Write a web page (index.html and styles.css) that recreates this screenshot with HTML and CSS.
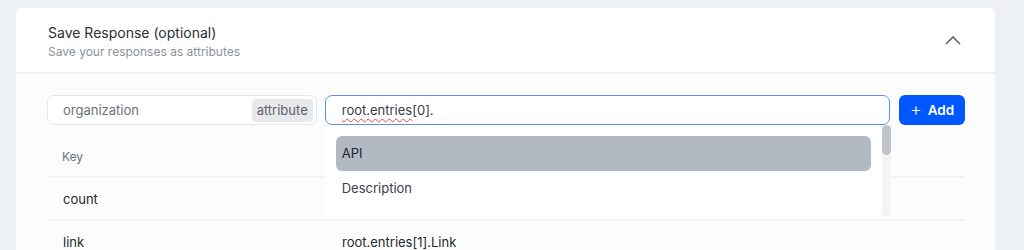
FILE: index.html
```html
<!DOCTYPE html>
<html>
<head>
	<title>Save Response</title>
	<link rel="stylesheet" href="styles.css">
</head>
<body>
	<div class="card">
		<div class="card-header">
			<div class="heading">
				<div class="title">Save Response (optional)</div>
				<div class="subtitle">Save your responses as attributes</div>
			</div>
			<svg class="chevron" width="16" height="10" viewBox="0 0 16 10">
				<path d="M1 9 L8 2 L15 9" fill="none" stroke="#5f6670" stroke-width="1.6"/>
			</svg>
		</div>
		<div class="card-body">
			<div class="form-row">
				<div class="field key-field">
					<span class="field-text">organization</span>
					<span class="badge">attribute</span>
				</div>
				<div class="path-wrap">
					<div class="field path-field">
						<span class="field-value"><span class="misspelt">root.entries</span>[0].</span>
					</div>
					<div class="dropdown">
						<div class="options">
							<div class="option active">API</div>
							<div class="option">Description</div>
						</div>
						<div class="scroll-track"><div class="scroll-thumb"></div></div>
					</div>
				</div>
				<button class="add-btn"><span class="plus">+</span> Add</button>
			</div>
			<div class="attr-table">
				<div class="attr-row head">
					<div class="cell key">Key</div>
					<div class="cell value"></div>
				</div>
				<div class="attr-row">
					<div class="cell key">count</div>
					<div class="cell value"></div>
				</div>
				<div class="attr-row">
					<div class="cell key">link</div>
					<div class="cell value">root.entries[1].Link</div>
				</div>
			</div>
		</div>
	</div>
</body>
</html>
```

FILE: styles.css
```css
body {
	margin: 0;
	background: #eef1f4;
	font-family: Inter, "Noto Sans", sans-serif;
	color: #24282e;
}
.card {
	margin: 8px 29px 0 16px;
	background: #fcfcfc;
	border-radius: 6px 6px 0 0;
	overflow: hidden;
}
.card-header {
	display: flex;
	align-items: center;
	justify-content: space-between;
	padding: 16px 34px 12px 32px;
	background: #fff;
	border-bottom: 2px solid #f0f1f3;
}
.title {
	font-size: 14px;
	line-height: 18px;
	color: #2b2f36;
}
.subtitle {
	margin-top: 2px;
	font-size: 12px;
	line-height: 16px;
	color: #8c929c;
}
.chevron {
	display: block;
	margin-top: -4px;
}
.card-body {
	padding: 21px 30px 0 31px;
}
.form-row {
	display: flex;
	gap: 8px;
	height: 30px;
}
.field {
	box-sizing: border-box;
	height: 30px;
	border: 1px solid #e4e6ea;
	border-radius: 7px;
	background: #fff;
	display: flex;
	align-items: center;
	font-size: 13px;
}
.key-field {
	width: 270px;
	padding: 0 3px 0 15px;
	justify-content: space-between;
}
.field-text {
	color: #6b717b;
}
.badge {
	background: #e8e9eb;
	color: #5b616a;
	border-radius: 4px;
	padding: 3px 5px;
	font-size: 13px;
	line-height: 17px;
}
.path-wrap {
	position: relative;
	width: 566px;
}
.path-field {
	width: 100%;
	border-color: #5c8ff0;
	padding-left: 16px;
}
.field-value {
	color: #3b4048;
}
.misspelt {
	text-decoration: underline wavy #e5484d;
	text-decoration-thickness: 1px;
	text-underline-offset: 3px;
}
.dropdown {
	position: absolute;
	top: 30px;
	left: 0;
	width: 566px;
	height: 92px;
	box-sizing: border-box;
	padding-left: 11px;
	background: #fff;
	display: flex;
	gap: 11px;
	z-index: 2;
}
.options {
	flex: 1;
	padding-top: 11px;
}
.scroll-track {
	width: 9px;
	height: 92px;
	background: #f3f4f5;
	border-radius: 5px;
}
.scroll-thumb {
	height: 30px;
	background: #c1c4c9;
	border-radius: 5px;
}
.option {
	height: 35px;
	line-height: 35px;
	padding: 0 6px;
	border-radius: 6px;
	font-size: 13px;
	color: #3b4048;
}
.option.active {
	background: #b3b9c3;
	color: #1f2329;
}
.add-btn {
	margin-left: 1px;
	width: 66px;
	height: 30px;
	border: 0;
	border-radius: 6px;
	background: #0057ff;
	color: #fff;
	font-family: Inter, sans-serif;
	font-size: 13.5px;
	font-weight: 600;
	display: flex;
	align-items: center;
	justify-content: center;
	gap: 6px;
	padding: 0;
}
.plus {
	font-weight: 300;
	font-size: 18px;
	line-height: 18px;
}
.attr-table {
	margin-top: 11px;
}
.attr-row {
	display: grid;
	grid-template-columns: 278px 1fr;
	height: 43px;
	box-sizing: border-box;
	border-bottom: 2px solid #f2f3f4;
	align-items: center;
}
.attr-row.head {
	height: 42px;
}
.cell {
	font-size: 13px;
	color: #24282e;
}
.cell.key {
	padding-left: 16px;
}
.cell.value {
	padding-left: 17px;
}
.head .cell {
	font-size: 12px;
	color: #6b717b;
	padding-left: 15px;
}
```
